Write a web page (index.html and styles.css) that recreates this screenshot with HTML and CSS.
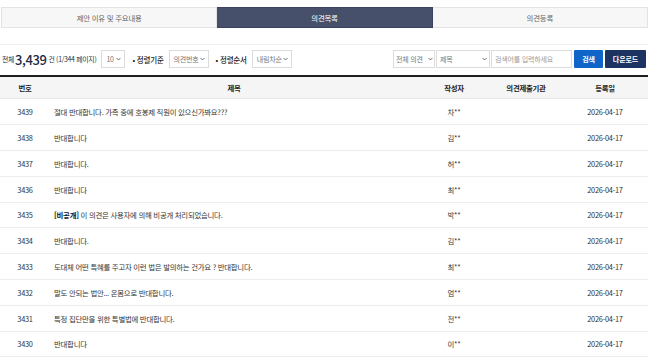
FILE: index.html
```html
<!DOCTYPE html>
<html lang="ko">
<head>
<meta charset="utf-8">
<title>의견목록</title>
<link rel="stylesheet" href="styles.css">
</head>
<body>
<div class="wrap">
  <nav class="tabs">
    <a class="tab">제안 이유 및 주요내용</a>
    <a class="tab active">의견목록</a>
    <a class="tab">의견등록</a>
  </nav>

  <div class="toolbar">
    <div class="left">
      <span class="total-label">전체</span>
      <span class="total-num">3,439</span>
      <span class="total-unit">건 (1/344 페이지)</span>
      <div class="sel w24"><span>10</span><svg class="chev" viewBox="0 0 8 5"><path d="M1 1l3 3 3-3"/></svg></div>
      <span class="lbl">• 정렬기준</span>
      <div class="sel w40"><span>의견번호</span><svg class="chev" viewBox="0 0 8 5"><path d="M1 1l3 3 3-3"/></svg></div>
      <span class="lbl">• 정렬순서</span>
      <div class="sel w40"><span>내림차순</span><svg class="chev" viewBox="0 0 8 5"><path d="M1 1l3 3 3-3"/></svg></div>
    </div>
    <div class="right">
      <div class="sel w42"><span>전체 의견</span><svg class="chev" viewBox="0 0 8 5"><path d="M1 1l3 3 3-3"/></svg></div>
      <div class="sel w54"><span>제목</span><svg class="chev" viewBox="0 0 8 5"><path d="M1 1l3 3 3-3"/></svg></div>
      <div class="input">검색어를 입력하세요</div>
      <button class="btn search">검색</button>
      <button class="btn download">다운로드</button>
    </div>
  </div>

  <div class="list">
    <div class="row head">
      <div class="c">번호</div><div class="c">제목</div><div class="c">작성자</div><div class="c">의견제출기관</div><div class="c">등록일</div>
    </div>
    <div class="row"><div class="c">3439</div><div class="t">절대 반대합니다. 가족 중에 호봉제 직원이 있으신가봐요???</div><div class="c">차**</div><div class="c"></div><div class="c">2026-04-17</div></div>
    <div class="row"><div class="c">3438</div><div class="t">반대합니다</div><div class="c">김**</div><div class="c"></div><div class="c">2026-04-17</div></div>
    <div class="row"><div class="c">3437</div><div class="t">반대합니다.</div><div class="c">허**</div><div class="c"></div><div class="c">2026-04-17</div></div>
    <div class="row"><div class="c">3436</div><div class="t">반대합니다</div><div class="c">최**</div><div class="c"></div><div class="c">2026-04-17</div></div>
    <div class="row"><div class="c">3435</div><div class="t"><b>[비공개]</b> 이 의견은 사용자에 의해 비공개 처리되었습니다.</div><div class="c">박**</div><div class="c"></div><div class="c">2026-04-17</div></div>
    <div class="row"><div class="c">3434</div><div class="t">반대합니다.</div><div class="c">김**</div><div class="c"></div><div class="c">2026-04-17</div></div>
    <div class="row"><div class="c">3433</div><div class="t">도대체 어떤 특혜를 주고자 이런 법은 발의하는 건가요 ? 반대합니다.</div><div class="c">최**</div><div class="c"></div><div class="c">2026-04-17</div></div>
    <div class="row"><div class="c">3432</div><div class="t">말도 안되는 법안... 온몸으로 반대합니다.</div><div class="c">엄**</div><div class="c"></div><div class="c">2026-04-17</div></div>
    <div class="row"><div class="c">3431</div><div class="t">특정 집단만을 위한 특별법에 반대합니다.</div><div class="c">전**</div><div class="c"></div><div class="c">2026-04-17</div></div>
    <div class="row"><div class="c">3430</div><div class="t">반대합니다</div><div class="c">이**</div><div class="c"></div><div class="c">2026-04-17</div></div>
  </div>
</div>
</body>
</html>
```

FILE: styles.css
```css
* { box-sizing: border-box; }
html, body { margin: 0; padding: 0; background: #fff; }
body {
  font-family: "Noto Sans CJK KR", "Noto Sans", sans-serif;
  font-size: 7.4px;
  color: #333;
}
.wrap { width: 648px; padding-top: 7px; }

.tabs { display: flex; height: 21px; margin-left: 1px; }
.tab {
  flex: 1;
  display: flex; align-items: center; justify-content: center;
  background: #f7f7f7;
  border: 1px solid #e3e3e3;
  color: #666;
  font-size: 7.4px;
  letter-spacing: -0.2px;
}
.tab + .tab { border-left: none; }
.tab.active { background: #46506a; border-color: #3a4460; color: #fff; }

.toolbar {
  margin-top: 16px;
  border-top: 1px solid #efefef;
  padding: 5px 0 7px 0;
  display: flex; justify-content: space-between; align-items: center;
  height: 31px;
}
.left, .right { display: flex; align-items: center; height: 18px; }
.left { padding-left: 2px; }
.total-label { font-size: 6.8px; color: #222; letter-spacing: -0.3px; }
.total-num { font-size: 13px; color: #1d2a44; letter-spacing: -0.4px; margin: 0 2px 0 1px; font-weight: 500; }
.total-unit { font-size: 6.9px; color: #333; letter-spacing: -0.3px; }
.sel {
  height: 18px;
  border: 1px solid #dcdcdc;
  background: #fff;
  display: flex; align-items: center; justify-content: space-between;
  padding: 0 3px 0 4px;
  color: #777;
  font-size: 7px;
  letter-spacing: -0.2px;
}
.chev { width: 5px; height: 4px; fill: none; stroke: #555; stroke-width: 1.4; }
.w24 { width: 24px; margin-left: 5px; }
.w40 { width: 40px; }
.w42 { width: 42px; padding-left: 2px; padding-right: 1px; }
.w54 { width: 54px; margin-left: 1px; padding-right: 2px; padding-left: 3px; }
.lbl { color: #222; font-size: 7.5px; letter-spacing: -0.2px; margin: 0 5px 0 7px; font-weight: 500; }
.right { padding-right: 2px; }
.input {
  width: 81px; height: 18px; margin-left: 1px;
  border: 1px solid #dcdcdc;
  color: #999; font-size: 7px; letter-spacing: -0.2px;
  display: flex; align-items: center; padding-left: 3px;
}
.btn {
  height: 18px; border: none; border-radius: 1px;
  color: #fff; font-family: inherit; font-size: 7px; font-weight: 700;
  padding: 0; letter-spacing: -0.1px;
}
.search { width: 29px; background: #0f66c8; margin-left: 2px; }
.download { width: 41px; background: #1d3462; margin-left: 2px; }

.list { border-top: 2px solid #1e1e1e; }
.row {
  display: grid;
  grid-template-columns: 50px 368px 72px 72px 86px;
  height: 25.8px;
  border-bottom: 1px solid #ececec;
  align-items: center;
  letter-spacing: -0.25px;
}
.row.head { height: 22.4px; background: #f5f5f5; border-bottom: 1px solid #e6e6e6; font-weight: 700; color: #222; }
.c { text-align: center; }
.t { padding-left: 4px; white-space: nowrap; }
.t b { font-weight: 700; color: #111; }
```
